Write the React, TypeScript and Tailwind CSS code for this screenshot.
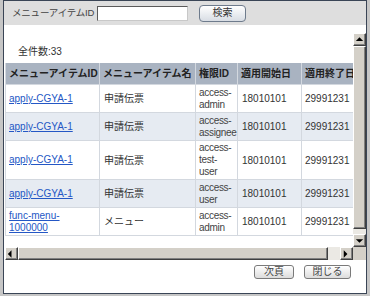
const rows = [
  { id: ["apply-CGYA-1"], name: "申請伝票", access: ["access-", "admin"], start: "18010101", end: "29991231", h: "h-[28px]", bg: "bg-white" },
  { id: ["apply-CGYA-1"], name: "申請伝票", access: ["access-", "assignee"], start: "18010101", end: "29991231", h: "h-[28px]", bg: "bg-[#e6ebf2]" },
  { id: ["apply-CGYA-1"], name: "申請伝票", access: ["access-", "test-", "user"], start: "18010101", end: "29991231", h: "h-[39px]", bg: "bg-white" },
  { id: ["apply-CGYA-1"], name: "申請伝票", access: ["access-", "user"], start: "18010101", end: "29991231", h: "h-[28px]", bg: "bg-[#e6ebf2]" },
  { id: ["func-menu-", "1000000"], name: "メニュー", access: ["access-", "admin"], start: "18010101", end: "29991231", h: "h-[28px]", bg: "bg-white" },
]

const headers = ["メニューアイテムID", "メニューアイテム名", "権限ID", "適用開始日", "適用終了日"]

const cols = "grid grid-cols-[95px_96px_42px_64px_62px] w-[359px]"
const cell = "border-r border-b border-[#d3d8df] px-[3px] flex items-center overflow-hidden whitespace-nowrap"

function Lines({ items }: { items: string[] }) {
  return (
    <div className="leading-[12px]">
      {items.map((t, i) => (
        <div key={i}>{t}</div>
      ))}
    </div>
  )
}

function ScrollBtn({ dir }: { dir: "up" | "down" | "left" | "right" }) {
  const pts = {
    up: "2,6 6,2 10,6",
    down: "2,3 6,7 10,3",
    left: "6,1 2,5 6,9",
    right: "3,1 7,5 3,9",
  }[dir]
  return (
    <div className="w-[13px] h-[13px] shrink-0 bg-[#d4d0c8] border border-t-white border-l-white border-r-[#404040] border-b-[#404040] shadow-[inset_-1px_-1px_0_#808080] flex items-center justify-center">
      <svg width="11" height="10" viewBox="0 0 12 10">
        <polygon points={pts} fill="#000" />
      </svg>
    </div>
  )
}

export default function App() {
  return (
    <div
      className="w-[370px] h-[296px] bg-[#c6c6c6] text-[10px] text-[#333]"
      style={{ fontFamily: '"Liberation Sans", "Noto Sans CJK JP", sans-serif' }}
    >
      <div className="ml-[3px] w-[364px] h-[294px] border border-[#3a4556] bg-white flex flex-col">
        {/* search bar */}
        <div className="h-[24px] bg-[#dedede] flex items-center shrink-0">
          <span className="pl-[8px] w-[93px] shrink-0 whitespace-nowrap text-[#444] text-[9.5px] tracking-[-0.2px]">
            メニューアイテムID
          </span>
          <input
            className="w-[91px] h-[15px] bg-white border border-[#5a5a5a] border-r-[#c8c8c8] border-b-[#c8c8c8] outline-none"
            readOnly
          />
          <button className="ml-[11px] w-[47px] h-[17px] rounded-[4px] border border-[#6e7b8c] bg-gradient-to-b from-white to-[#d8dde4] text-[#333] leading-none">
            検索
          </button>
        </div>

        {/* scroll area */}
        <div className="mt-[8px] ml-[1px] w-[361px] h-[227px] flex shrink-0">
          <div className="w-[348px] flex flex-col">
            <div className="h-[214px] overflow-hidden pt-[13px]">
              <p className="pl-[13px] leading-[12px]">全件数:33</p>
              <div className="mt-[5px]">
                <div className={`${cols} h-[22px] bg-[#a9b3c1] font-bold text-[#222]`}>
                  {headers.map((h, i) => (
                    <div key={h} className={`${cell} border-[#c9d0da] ${i === 0 ? "border-l" : ""}`}>
                      {h}
                    </div>
                  ))}
                </div>
                {rows.map((r, i) => (
                  <div key={i} className={`${cols} ${r.h} ${r.bg}`}>
                    <div className={`${cell} border-l`}>
                      <a href="#" className="text-[#2457c5] underline">
                        <Lines items={r.id} />
                      </a>
                    </div>
                    <div className={`${cell} px-[4px]`}>{r.name}</div>
                    <div className={`${cell} text-[#444] tracking-[-0.3px]`}>
                      <Lines items={r.access} />
                    </div>
                    <div className={`${cell} px-[4px]`}>{r.start}</div>
                    <div className={`${cell}`}>{r.end}</div>
                  </div>
                ))}
              </div>
            </div>
            {/* horizontal scrollbar */}
            <div className="h-[13px] flex">
              <ScrollBtn dir="left" />
              <div className="w-[310px] h-[13px] bg-[#d4d0c8] border border-t-white border-l-white border-r-[#404040] border-b-[#404040] shadow-[inset_-1px_-1px_0_#808080]" />
              <div className="w-[12px] h-[13px] bg-[#ebe9e4]" />
              <ScrollBtn dir="right" />
            </div>
          </div>
          {/* vertical scrollbar */}
          <div className="w-[13px] flex flex-col">
            <ScrollBtn dir="up" />
            <div className="h-[183px] bg-[#d4d0c8] border border-t-white border-l-white border-r-[#404040] border-b-[#404040] shadow-[inset_-1px_-1px_0_#808080]" />
            <div className="h-[5px] bg-[#ebe9e4]" />
            <ScrollBtn dir="down" />
            <div className="h-[13px] bg-[#d4d0c8]" />
          </div>
        </div>

        {/* footer buttons */}
        <div className="mt-[5px] pr-[15px] flex justify-end gap-[10px]">
          <button className="w-[40px] h-[14px] rounded-[3px] border border-[#7a7a7a] bg-gradient-to-b from-white to-[#dcdcdc] leading-none text-[#444]">
            次頁
          </button>
          <button className="w-[47px] h-[14px] rounded-[3px] border border-[#7a7a7a] bg-gradient-to-b from-white to-[#dcdcdc] leading-none text-[#444]">
            閉じる
          </button>
        </div>
      </div>
    </div>
  )
}
